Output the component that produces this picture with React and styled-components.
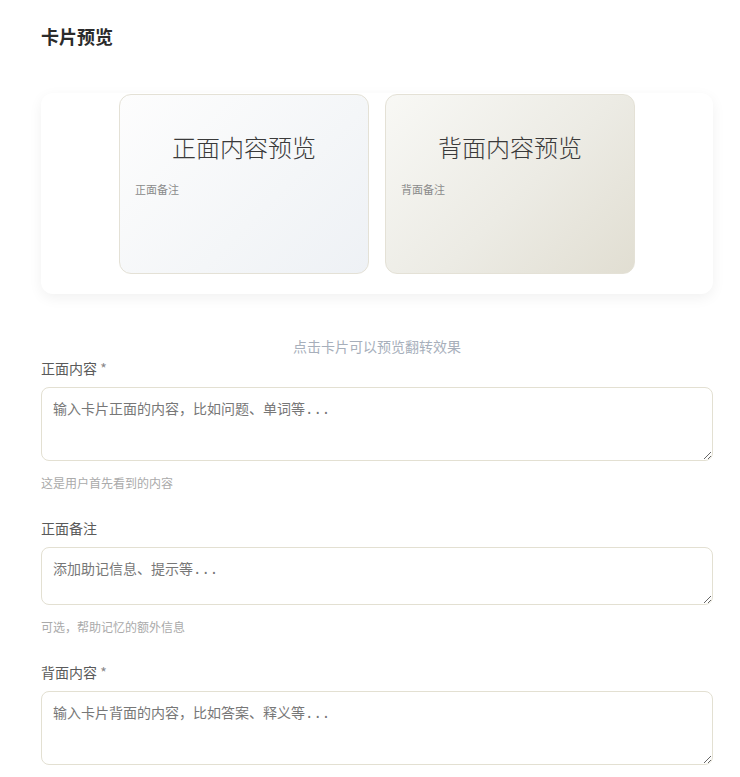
import React from 'react';
import styled, { createGlobalStyle } from 'styled-components';

const GlobalStyle = createGlobalStyle`
  html, body {
    margin: 0;
    padding: 0;
    background: #ffffff;
  }
  body {
    font-family: "Noto Sans CJK SC", "Noto Sans", "Liberation Sans", sans-serif;
    color: #333;
  }
  * {
    box-sizing: border-box;
  }
`;

const Page = styled.div`
  padding: 23px 27px 0 41px;
`;

const Heading = styled.h2`
  margin: 0;
  font-size: 18px;
  line-height: 26px;
  font-weight: 700;
  color: #2b2b2b;
`;

const PreviewBox = styled.div`
  margin-top: 44px;
  padding: 1px 0 20px;
  border-radius: 12px;
  background: #fff;
  box-shadow: 0 4px 14px rgba(0, 0, 0, 0.06);
  display: flex;
  justify-content: center;
  gap: 16px;
`;

const Card = styled.div`
  width: 250px;
  height: 180px;
  border-radius: 12px;
  border: 1px solid #e4e1d6;
  padding: 36px 15px 0;
  background: ${(p) =>
    p.$back
      ? 'linear-gradient(135deg, #f8f8f5 0%, #ecebe4 55%, #e1ded2 100%)'
      : 'linear-gradient(135deg, #fdfdfd 0%, #f4f6f8 60%, #eef1f5 100%)'};
`;

const CardTitle = styled.div`
  text-align: center;
  font-size: 24px;
  line-height: 32px;
  font-weight: 300;
  color: #3a3a3a;
`;

const CardNote = styled.div`
  margin-top: 18px;
  font-size: 11px;
  line-height: 16px;
  color: #8a8a8a;
`;

const FlipHint = styled.p`
  margin: 42px 0 2px;
  text-align: center;
  font-size: 14px;
  line-height: 20px;
  color: #a7afbb;
`;

const Field = styled.div`
  margin-bottom: 26px;
`;

const Label = styled.label`
  display: block;
  font-size: 14px;
  line-height: 20px;
  color: #5a5a5a;
  margin-bottom: 9px;

  span {
    color: #888;
  }
`;

const TextArea = styled.textarea`
  display: block;
  width: 100%;
  height: ${(p) => p.$h}px;
  padding: 10px 11px;
  border: 1px solid #e3e0d2;
  border-radius: 8px;
  font-family: "DejaVu Sans Mono", "Noto Sans CJK SC", monospace;
  font-size: 14px;
  line-height: 22px;
  color: #333;
  resize: vertical;
  outline: none;

  &::placeholder {
    color: #777;
  }
`;

const Hint = styled.div`
  margin-top: 13px;
  font-size: 12px;
  line-height: 18px;
  color: #aaa;
`;

const fields = [
  {
    label: '正面内容',
    required: true,
    placeholder: '输入卡片正面的内容，比如问题、单词等...',
    height: 74,
    hint: '这是用户首先看到的内容',
  },
  {
    label: '正面备注',
    placeholder: '添加助记信息、提示等...',
    height: 58,
    hint: '可选，帮助记忆的额外信息',
  },
  {
    label: '背面内容',
    required: true,
    placeholder: '输入卡片背面的内容，比如答案、释义等...',
    height: 74,
  },
];

const App = () => {
  return (
    <>
      <GlobalStyle />
      <Page>
        <Heading>卡片预览</Heading>

        <PreviewBox>
          <Card>
            <CardTitle>正面内容预览</CardTitle>
            <CardNote>正面备注</CardNote>
          </Card>
          <Card $back>
            <CardTitle>背面内容预览</CardTitle>
            <CardNote>背面备注</CardNote>
          </Card>
        </PreviewBox>

        <FlipHint>点击卡片可以预览翻转效果</FlipHint>

        {fields.map((f) => (
          <Field key={f.label}>
            <Label>
              {f.label}
              {f.required && <span> *</span>}
            </Label>
            <TextArea $h={f.height} placeholder={f.placeholder} />
            {f.hint && <Hint>{f.hint}</Hint>}
          </Field>
        ))}
      </Page>
    </>
  );
};

export default App;
